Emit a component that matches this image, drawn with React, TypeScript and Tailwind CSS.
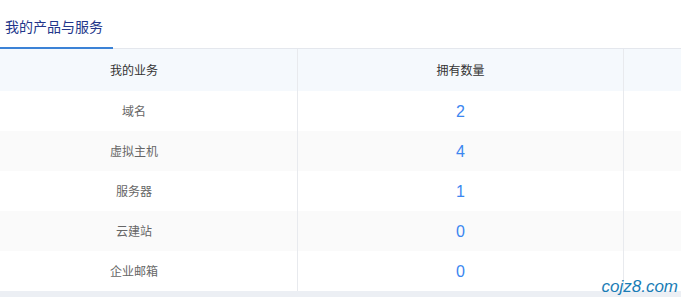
import React from "react";

const rows = [
  { name: "域名", count: 2 },
  { name: "虚拟主机", count: 4 },
  { name: "服务器", count: 1 },
  { name: "云建站", count: 0 },
  { name: "企业邮箱", count: 0 },
];

const font = {
  fontFamily: '"Liberation Sans", "Noto Sans CJK SC", sans-serif',
};

export default function App() {
  return (
    <div className="relative w-[681px] h-[297px] bg-white overflow-hidden" style={font}>
      <div className="flex h-[49px] border-b border-[#e4e7ed]">
        <div className="w-[113px] h-[49px] -mb-px border-b-2 border-[#3b82d6] pl-[5px] pt-[17px] text-[14px] leading-[20px] text-[#22368a]">
          我的产品与服务
        </div>
      </div>

      {/* first column is partly scrolled out of view */}
      <div className="-ml-[29px]">
        <div className="grid grid-cols-[327px_326px_1fr] bg-[#f5f9fd] h-[42px] text-[12px] text-[#333]">
          <div className="flex items-center justify-center pt-[2px] border-r border-[#e8eaee]">我的业务</div>
          <div className="flex items-center justify-center pt-[2px] border-r border-[#e8eaee]">拥有数量</div>
          <div />
        </div>

        {rows.map((row, i) => (
          <div
            key={row.name}
            className={
              "grid grid-cols-[327px_326px_1fr] h-[40px] " +
              (i % 2 === 1 ? "bg-[#fafafa]" : "bg-white")
            }
          >
            <div className="flex items-center justify-center pt-[2px] border-r border-[#e8eaee] text-[12px] text-[#666]">
              {row.name}
            </div>
            <div className="flex items-center justify-center pt-[1px] border-r border-[#e8eaee] text-[16px] text-[#3b86f0]">
              {row.count}
            </div>
            <div />
          </div>
        ))}
      </div>

      <div className="h-[6px] bg-[#eceff4]" />

      <div className="absolute right-[3px] bottom-[0px] italic text-[17px] leading-[20px] text-[#1b7db6]">
        cojz8.com
      </div>
    </div>
  );
}
